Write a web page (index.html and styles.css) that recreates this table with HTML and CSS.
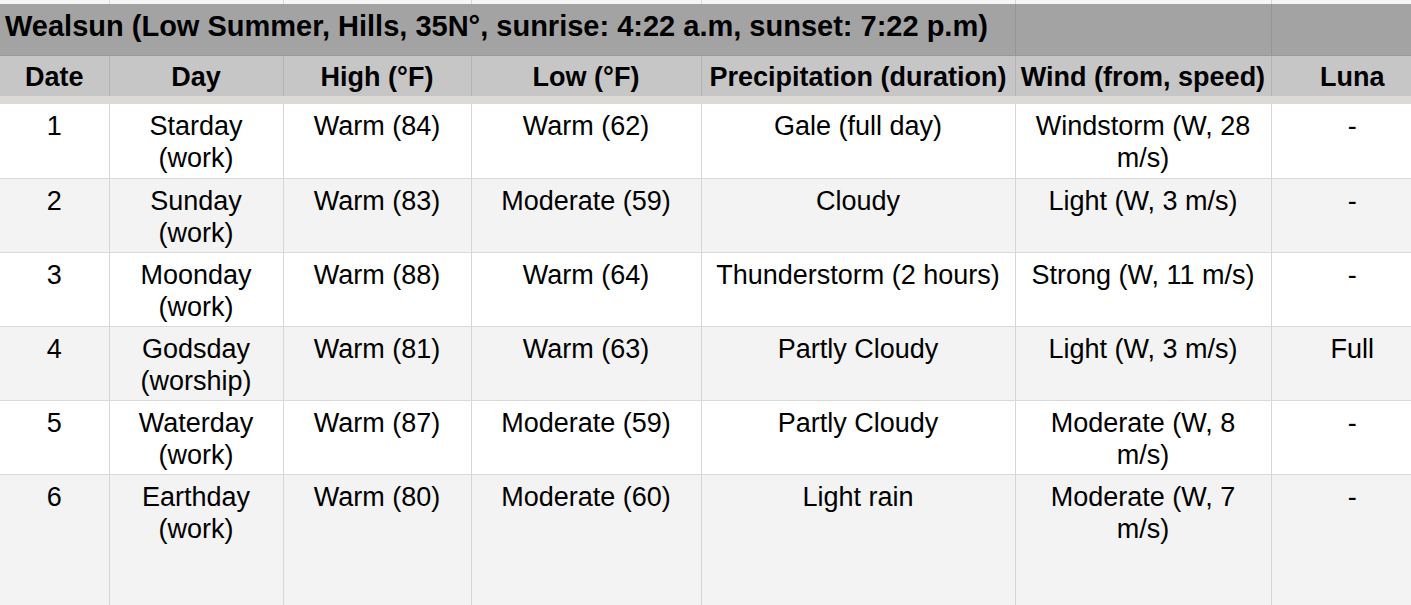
FILE: index.html
```html
<!DOCTYPE html>
<html>
<head>
<meta charset="utf-8">
<link rel="stylesheet" href="styles.css">
</head>
<body>
<table class="sheet">
  <colgroup>
    <col class="c-date"><col class="c-day"><col class="c-high"><col class="c-low"><col class="c-prec"><col class="c-wind"><col class="c-luna">
  </colgroup>
  <tr class="top-strip"><td></td><td></td><td></td><td></td><td></td><td></td><td></td></tr>
  <tr class="title-row">
    <td colspan="5" class="title">Wealsun (Low Summer, Hills, 35N°, sunrise: 4:22 a.m, sunset: 7:22 p.m)</td>
    <td></td><td></td>
  </tr>
  <tr class="head-row">
    <th>Date</th><th>Day</th><th>High (°F)</th><th>Low (°F)</th><th>Precipitation (duration)</th><th>Wind (from, speed)</th><th>Luna</th>
  </tr>
  <tr class="shadow-row"><td colspan="7"></td></tr>
  <tr class="row">
    <td>1</td><td>Starday<br>(work)</td><td>Warm (84)</td><td>Warm (62)</td><td>Gale (full day)</td><td>Windstorm (W, 28<br>m/s)</td><td>-</td>
  </tr>
  <tr class="row alt">
    <td>2</td><td>Sunday<br>(work)</td><td>Warm (83)</td><td>Moderate (59)</td><td>Cloudy</td><td>Light (W, 3 m/s)</td><td>-</td>
  </tr>
  <tr class="row">
    <td>3</td><td>Moonday<br>(work)</td><td>Warm (88)</td><td>Warm (64)</td><td>Thunderstorm (2 hours)</td><td>Strong (W, 11 m/s)</td><td>-</td>
  </tr>
  <tr class="row alt">
    <td>4</td><td>Godsday<br>(worship)</td><td>Warm (81)</td><td>Warm (63)</td><td>Partly Cloudy</td><td>Light (W, 3 m/s)</td><td>Full</td>
  </tr>
  <tr class="row">
    <td>5</td><td>Waterday<br>(work)</td><td>Warm (87)</td><td>Moderate (59)</td><td>Partly Cloudy</td><td>Moderate (W, 8<br>m/s)</td><td>-</td>
  </tr>
  <tr class="row alt last">
    <td>6</td><td>Earthday<br>(work)</td><td>Warm (80)</td><td>Moderate (60)</td><td>Light rain</td><td>Moderate (W, 7<br>m/s)</td><td>-</td>
  </tr>
</table>
</body>
</html>
```
FILE: styles.css
```css
html, body {
  margin: 0;
  padding: 0;
  background: #ffffff;
  overflow: hidden;
}

.sheet {
  width: 1433px;
  table-layout: fixed;
  border-collapse: collapse;
  font-family: "Liberation Sans", Arial, sans-serif;
  font-size: 27px;
  color: #000;
}

.c-date { width: 109px; }
.c-day { width: 174px; }
.c-high { width: 188px; }
.c-low { width: 230px; }
.c-prec { width: 314px; }
.c-wind { width: 256px; }
.c-luna { width: 162px; }

.sheet td, .sheet th {
  padding: 0;
  border-left: 1px solid #d6d6d6;
  text-align: center;
}

.sheet tr > :first-child {
  border-left: none;
}

.top-strip td {
  height: 4px;
  line-height: 4px;
  font-size: 0;
  background: #f6f6f6;
  border-left-color: #d9d9d9;
}

.title-row td {
  height: 45px;
  padding-bottom: 6px;
  background: #a3a3a3;
  border-left-color: #969696;
  border-bottom: 1px solid #999999;
}

.title-row .title {
  text-align: left;
  font-weight: bold;
  font-size: 29px;
  padding-left: 5px;
  white-space: nowrap;
}

.head-row th {
  height: 38px;
  padding-top: 2px;
  line-height: 32px;
  background: #c6c6c6;
  border-left-color: #b4b4b4;
  font-weight: bold;
  white-space: nowrap;
}

.shadow-row td {
  height: 8px;
  line-height: 8px;
  font-size: 0;
  background: #dcdad5;
}

.row td {
  height: 74px;
  vertical-align: top;
  padding-top: 6px;
  line-height: 32px;
  border-bottom: 1px solid #d9d9d9;
  box-sizing: border-box;
  background: #ffffff;
}

.row.alt td {
  background: #f3f3f3;
}

.row.last td {
  height: 140px;
  border-bottom: none;
}
```
